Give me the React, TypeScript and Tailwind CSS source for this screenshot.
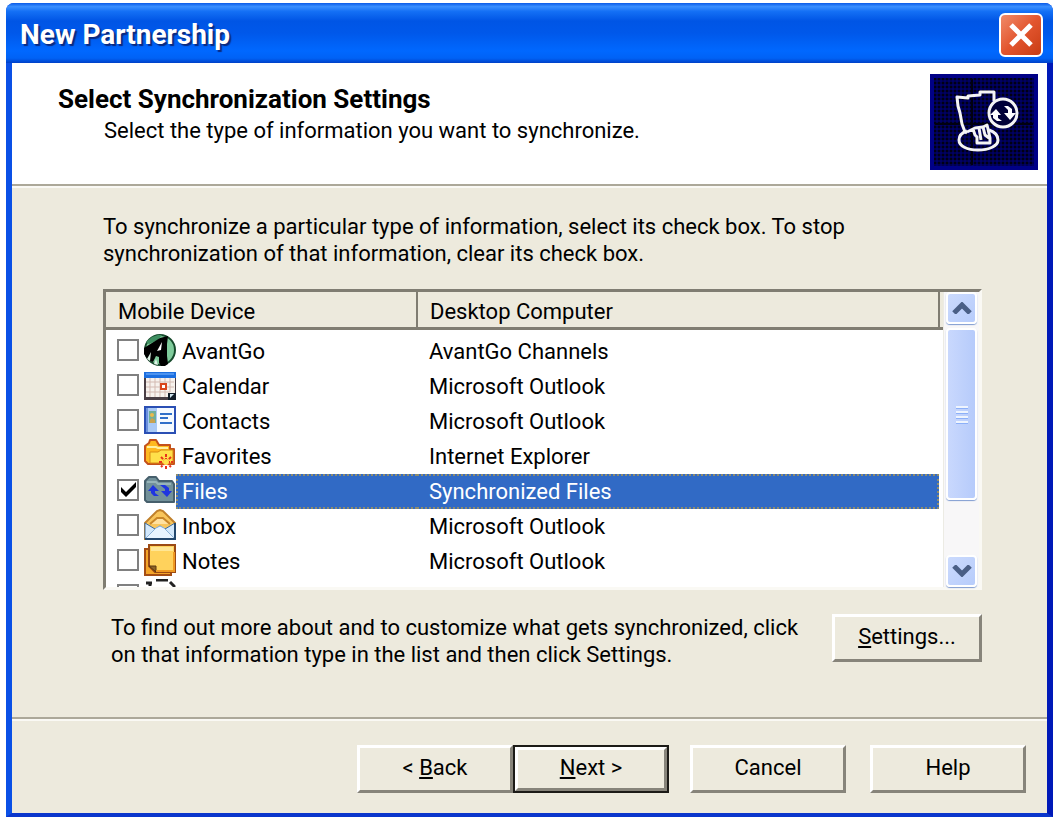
import type { ReactNode } from "react";

interface InfoType {
  id: string;
  device: string;
  desktop: string;
  icon: ReactNode;
  checked?: boolean;
  selected?: boolean;
}

const AvantGoIcon = () => (
  <svg className="size-8 shrink-0" viewBox="0 0 32 32" aria-hidden="true">
    <circle cx="16" cy="16" r="15" fill="#7fcb9b" stroke="#164a2c" strokeWidth="2" />
    <path d="M2 8 8 3l6-2h4l-4 5-9 4z" fill="#3f8f61" />
    <path d="M0 14 8 9l8-5 8-2-1 8v12l1 8-3 2h-4l-2-3v-6l-3-1-3 6-5-2-4-6z" fill="#000" />
    <path d="M18 8 13 17l4-1z" fill="#fff" />
    <path d="M3 25 7 18l-1 9zM10 30l2-5 2 6z" fill="#dff3e6" />
  </svg>
);

const CalendarIcon = () => (
  <svg className="size-8 shrink-0" viewBox="0 0 32 32" aria-hidden="true">
    <rect x="0" y="3" width="32" height="28" fill="#4a3f45" />
    <rect x="0" y="3" width="32" height="6" fill="#1c6fe0" />
    <path d="M2 5h28" stroke="#7db7ff" strokeWidth="1" />
    <rect x="2" y="9" width="29" height="19" fill="#f7f2ee" />
    <path
      d="M2 13h28M2 18h28M2 23h24M6 9v19M11 9v19M16 9v19M21 9v19M26 9v14"
      stroke="#d3bab2"
      strokeWidth="1"
    />
    <rect x="17" y="15" width="5" height="5" fill="#fff" stroke="#d9451c" strokeWidth="2" />
    <path d="M24 31v-7h8v7z" fill="#111c28" />
    <path d="M26 25h4l-4 4z" fill="#cfe4ee" />
  </svg>
);

const ContactsIcon = () => (
  <svg className="size-8 shrink-0" viewBox="0 0 32 32" aria-hidden="true">
    <rect x="1" y="3" width="30" height="26" fill="#f5faff" stroke="#2a4fb4" strokeWidth="2" />
    <rect x="2" y="4" width="11" height="24" fill="#a9c9f5" />
    <rect x="2" y="4" width="2" height="24" fill="#6b92dd" />
    <rect x="5" y="7" width="7" height="12" fill="#6fae9a" />
    <circle cx="8" cy="11" r="2" fill="#e9b94c" />
    <path d="M6 19v-3l2-2 3 2v3z" fill="#c9a24f" />
    <path d="M16 10h12M16 14h8M16 19h12" stroke="#2f6fc9" strokeWidth="2" />
  </svg>
);

const FavoritesIcon = () => (
  <svg className="size-8 shrink-0" viewBox="0 0 32 32" aria-hidden="true">
    <path
      d="M1 22V7l4-3 1-3h6l3 5h11v4h4v15H4z"
      fill="#ffb91f"
      stroke="#c4511b"
      strokeWidth="2"
      strokeLinejoin="round"
    />
    <path d="M3 8h9l2 1h10" stroke="#fff0a0" strokeWidth="2" fill="none" />
    <path d="M6 13h8l3-2h12v13H6z" fill="#ffe04a" stroke="#d98a13" strokeWidth="1" />
    <path
      d="M22 15v15M15 23h14M17 18l10 10M27 18 17 28"
      stroke="#e8321c"
      strokeWidth="2"
      strokeDasharray="3 1"
    />
    <circle cx="22" cy="23" r="3" fill="#ffe14d" />
  </svg>
);

const FilesIcon = () => (
  <svg className="size-8 shrink-0" viewBox="0 0 32 32" aria-hidden="true">
    <path
      d="M1 26V7l4-4h7l3 4h13l2 3v18H3z"
      fill="#72919a"
      stroke="#465f6c"
      strokeWidth="2"
      strokeLinejoin="round"
    />
    <path d="M3 8h9l2 2h13" stroke="#97b4b8" strokeWidth="2" fill="none" />
    <path d="m9 11 6 6h-4v2l4 3h-5l-3-3v-2H4z" fill="#1f35e0" />
    <path d="M16 11h5l4 3v3h3l-5 6-6-6h4v-2z" fill="#1f35e0" />
  </svg>
);

const InboxIcon = () => (
  <svg className="size-8 shrink-0" viewBox="0 0 32 32" aria-hidden="true">
    <path d="M1 14 13 2l3-1 3 1 12 12v16H1z" fill="#f8c55c" stroke="#c0802b" strokeWidth="2" />
    <path d="M6 15l7-6h6l7 6" stroke="#c8862a" strokeWidth="2" fill="#ffe1a0" />
    <path d="M1 14l10 6 5-3 5 3 10-6v16H1z" fill="#d3e8fb" stroke="#3c6c9f" strokeWidth="1" />
    <path d="M2 29 12 19l4-2 4 2 10 10" stroke="#8db3d8" strokeWidth="1" fill="#e8f4ff" />
    <path d="M1 30h30V14" stroke="#24486e" strokeWidth="2" fill="none" />
  </svg>
);

const NotesIcon = () => (
  <svg className="size-8 shrink-0" viewBox="0 0 32 32" aria-hidden="true">
    <rect x="1" y="5" width="26" height="26" fill="#f4a52a" stroke="#a44d14" strokeWidth="2" />
    <path d="M5 1h26v27H11l-6-6z" fill="#ffd25c" stroke="#9b4a14" strokeWidth="2" />
    <path d="M7 3h22v4H7z" fill="#ffe694" />
    <path d="M5 22h7v6z" fill="#8d6426" stroke="#5a3710" strokeWidth="1" />
    <path d="M12 27h18V8" stroke="#ef9a22" strokeWidth="2" fill="none" />
  </svg>
);

const TasksIcon = () => (
  <svg className="size-8 shrink-0" viewBox="0 0 32 32" aria-hidden="true">
    <path d="M6 2h18l6 6v22H6z" fill="#fff" />
    <path d="M2 4h6M6 4v3M12 1h12M26 3l4 4v3" stroke="#222" strokeWidth="3" fill="none" />
  </svg>
);

const SyncLogo = () => (
  <svg className="h-24 w-27 shrink-0" viewBox="0 0 108 96" aria-hidden="true">
    <defs>
      <pattern id="dots" width="4" height="4" patternUnits="userSpaceOnUse">
        <rect width="4" height="4" fill="#00004c" />
        <rect width="2" height="2" fill="#000014" />
        <rect x="2" y="2" width="2" height="2" fill="#000064" />
      </pattern>
    </defs>
    <rect width="108" height="96" fill="#000086" />
    <rect x="4" y="4" width="100" height="88" fill="url(#dots)" />
    <path d="M42 5v86M5 50h98" stroke="#000010" strokeWidth="2" />
    <g fill="none" stroke="#f4f4f4" strokeWidth="3" strokeLinejoin="round">
      <path d="M64 27v-9H50v3l-12 1v2l-11-1 1 9 2 7 2 11 3 8 2 1" />
      <path d="M37 57c-6 2-8 5-8 9 0 6 8 10 19 10s20-4 20-10c0-5-3-8-9-10" />
      <path d="M37 58l8-4 8-1 4-2 1 4M43 55l2 6 2 2v6h13v-5l-2-9M49 54l2 12M53 53l2 8 4 3" />
      <circle cx="73" cy="39" r="14" fill="#000038" />
    </g>
    <path d="m60 41 6-6 5 6h-3v3l4 3h-5l-4-3v-3z" fill="#fff" />
    <path d="M74 32h4l4 3v4h4l-6 7-6-7h4v-3z" fill="#fff" />
  </svg>
);

const infoTypes: InfoType[] = [
  { id: "avantgo", device: "AvantGo", desktop: "AvantGo Channels", icon: <AvantGoIcon /> },
  { id: "calendar", device: "Calendar", desktop: "Microsoft Outlook", icon: <CalendarIcon /> },
  { id: "contacts", device: "Contacts", desktop: "Microsoft Outlook", icon: <ContactsIcon /> },
  { id: "favorites", device: "Favorites", desktop: "Internet Explorer", icon: <FavoritesIcon /> },
  {
    id: "files",
    device: "Files",
    desktop: "Synchronized Files",
    icon: <FilesIcon />,
    checked: true,
    selected: true,
  },
  { id: "inbox", device: "Inbox", desktop: "Microsoft Outlook", icon: <InboxIcon /> },
  { id: "notes", device: "Notes", desktop: "Microsoft Outlook", icon: <NotesIcon /> },
  { id: "tasks", device: "", desktop: "", icon: <TasksIcon /> },
];

const PushButton = ({
  children,
  width = "w-39",
  isDefault = false,
}: {
  children: ReactNode;
  width?: string;
  isDefault?: boolean;
}) => (
  <div className={`${width} ${isDefault ? "bg-[#1c1b17] p-[2px]" : ""}`}>
    <button
      type="button"
      className={`w-full border-3 border-t-white border-r-[#87847a] border-b-[#87847a] border-l-white bg-[#edeadd] pb-1 ${
        isDefault ? "h-11" : "h-12"
      }`}
    >
      {children}
    </button>
  </div>
);

const CheckBox = ({ id, label, checked }: { id: string; label: string; checked?: boolean }) => (
  <span className="mb-1 grid size-[22px] shrink-0 place-items-center">
    <input
      id={id}
      type="checkbox"
      aria-label={label || "Tasks"}
      defaultChecked={checked}
      className="peer col-start-1 row-start-1 size-[22px] appearance-none border-2 border-[#808080] bg-white"
    />
    <svg
      className="pointer-events-none col-start-1 row-start-1 hidden size-4 peer-checked:block"
      viewBox="0 0 16 16"
      aria-hidden="true"
    >
      <path d="M1 5v5l5 5L16 5V0L6 10z" fill="#000" />
    </svg>
  </span>
);

const ScrollArrow = ({ label, d }: { label: string; d: string }) => (
  <button
    type="button"
    aria-label={label}
    className="grid h-8 w-full shrink-0 place-items-center rounded-sm border-2 border-white bg-linear-to-br from-[#cbdafd] to-[#b7ccfb] shadow-[0_1px_1px_#7f9bd0]"
  >
    <svg className="h-3 w-5" viewBox="0 0 20 12" aria-hidden="true">
      <path d={d} fill="none" stroke="#4a5f86" strokeWidth="5" />
    </svg>
  </button>
);

const ScrollBar = () => (
  <div className="flex w-9 shrink-0 flex-col border-l border-[#ecebe4] bg-[#f8f7f8] px-[2px]">
    <ScrollArrow label="Scroll up" d="M2 11 10 3l8 8" />
    <div className="mt-1 flex h-43 flex-col items-center justify-center gap-[3px] rounded-sm border-2 border-white bg-linear-to-r from-[#c9d8fd] to-[#b6cbfb] shadow-[0_1px_1px_#7f9bd0]">
      <span className="h-[2px] w-3 bg-[#eef4fe] shadow-[0_1px_0_#8cb0f8]" />
      <span className="h-[2px] w-3 bg-[#eef4fe] shadow-[0_1px_0_#8cb0f8]" />
      <span className="h-[2px] w-3 bg-[#eef4fe] shadow-[0_1px_0_#8cb0f8]" />
      <span className="h-[2px] w-3 bg-[#eef4fe] shadow-[0_1px_0_#8cb0f8]" />
    </div>
    <div className="flex-1" />
    <ScrollArrow label="Scroll down" d="M2 1l8 8 8-8" />
  </div>
);

const InfoTable = () => (
  <div className="flex h-[301px] border-3 border-t-[#807d72] border-r-[#faf9f4] border-b-[#faf9f4] border-l-[#807d72] bg-white">
    <div className="min-w-0 flex-1 overflow-hidden">
      <table className="w-full table-fixed border-collapse">
        <thead>
          <tr className="h-9 border-b-3 border-[#807d72] bg-[#edeadd] text-left">
            <th className="w-[311px] border-r-2 border-[#807d72] pt-1 pl-3 font-normal">
              Mobile Device
            </th>
            <th className="border-r-2 border-[#807d72] pt-1 pl-3 font-normal">
              Desktop Computer
            </th>
            <th className="w-1" />
          </tr>
        </thead>
        <tbody>
          <tr className="h-[6px]" />
          {infoTypes.map((info) => (
            <tr key={info.id} className="h-[35px]">
              <td className="p-0">
                <div className="flex h-[35px] items-center pl-[11px]">
                  <CheckBox id={info.id} label={info.device} checked={info.checked} />
                  <span className="mb-1 ml-[5px]">{info.icon}</span>
                  <label
                    htmlFor={info.id}
                    className={`flex h-[35px] flex-1 items-center border-y-2 border-l-2 border-dotted pl-1 ${
                      info.selected
                        ? "border-[#8f8c6c] bg-[#316ac5] text-white"
                        : "border-transparent"
                    }`}
                  >
                    {info.device}
                  </label>
                </div>
              </td>
              <td className="p-0">
                <div
                  className={`flex h-[35px] items-center border-y-2 border-r-2 border-dotted pl-3 ${
                    info.selected
                      ? "border-[#8f8c6c] bg-[#316ac5] text-white"
                      : "border-transparent"
                  }`}
                >
                  {info.desktop}
                </div>
              </td>
              <td />
            </tr>
          ))}
        </tbody>
      </table>
    </div>
    <ScrollBar />
  </div>
);

const App = () => {
  return (
    <div className="flex min-h-screen flex-col bg-white pt-[3px] pr-px pl-[6px] font-['Roboto',sans-serif] text-[22px] leading-[27px] text-black">
      <div className="flex flex-1 flex-col rounded-t-lg bg-[#0a3fd6]">
        <div className="flex h-15 items-center justify-between rounded-t-lg bg-[linear-gradient(180deg,#0a5be8_0%,#3a8fff_6%,#1470f5_14%,#0055e5_30%,#0058ea_50%,#0068ff_80%,#0062f5_92%,#0040c8_100%)] pt-1 pr-[10px] pl-[14px]">
          <h1 className="text-[28px] leading-8 font-bold text-white [text-shadow:2px_2px_1px_#0a2a80]">
            New Partnership
          </h1>
          <button
            type="button"
            aria-label="Close"
            className="grid size-11 place-items-center rounded-md border-2 border-white bg-linear-to-br from-[#f08a68] via-[#e2552e] to-[#c93c12]"
          >
            <svg className="size-6" viewBox="0 0 24 24" aria-hidden="true">
              <path d="M2 2l20 20M22 2 2 22" stroke="#fff" strokeWidth="5" />
            </svg>
          </button>
        </div>

        <div className="flex flex-1 flex-col border-r-6 border-b-4 border-l-6 border-r-[#0019b8] border-b-[#0a36cc] border-l-[#0a50e6] bg-[#edeadd]">
          <header className="flex h-[123px] items-start justify-between border-b-2 border-[#aca899] bg-white pt-[11px] pr-[9px] pl-[46px]">
            <div className="pt-3">
              <h2 className="text-[26px] font-bold">Select Synchronization Settings</h2>
              <p className="mt-1 pl-[46px]">Select the type of information you want to synchronize.</p>
            </div>
            <SyncLogo />
          </header>

          <main className="flex flex-1 flex-col border-t-2 border-[#faf9f4] pt-[25px] pr-[65px] pl-[91px]">
            <p className="mb-[22px]">
              To synchronize a particular type of information, select its check box. To stop
              <br />
              synchronization of that information, clear its check box.
            </p>
            <InfoTable />
            <div className="mt-6 flex items-start justify-between pl-2">
              <p>
                To find out more about and to customize what gets synchronized, click
                <br />
                on that information type in the list and then click Settings.
              </p>
              <PushButton width="w-[150px]">
                <u>S</u>ettings...
              </PushButton>
            </div>
          </main>

          <footer className="border-t-2 border-[#aca899]">
            <div className="flex justify-end border-t-2 border-[#faf9f4] pt-6 pr-[21px] pb-5">
              <PushButton>
                &lt; <u>B</u>ack
              </PushButton>
              <PushButton isDefault>
                <u>N</u>ext &gt;
              </PushButton>
              <div className="ml-[21px] flex gap-6">
                <PushButton>Cancel</PushButton>
                <PushButton>Help</PushButton>
              </div>
            </div>
          </footer>
        </div>
      </div>
    </div>
  );
};

export default App;
